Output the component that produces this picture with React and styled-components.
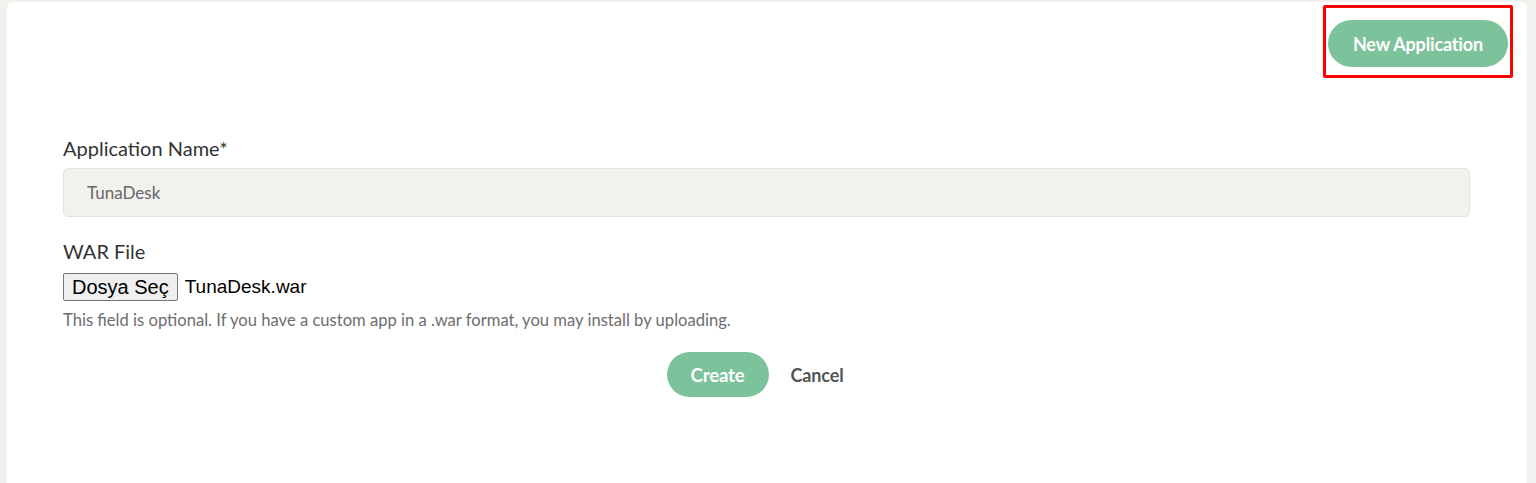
import React from 'react';
import styled, { createGlobalStyle } from 'styled-components';

const GlobalStyle = createGlobalStyle`
  html, body {
    margin: 0;
    padding: 0;
    background: #f2f1ee;
    font-family: Lato, "Open Sans", sans-serif;
    overflow: hidden;
  }
`;

// Styled components
const Page = styled.div`
  padding: 2px 9px 0 7px;
  height: 483px;
  box-sizing: border-box;
`;

const Card = styled.div`
  background: #fff;
  border-radius: 6px 6px 0 0;
  height: 100%;
  padding: 3px 14px 0 56px;
  box-sizing: border-box;
`;

const TopBar = styled.div`
  display: flex;
  justify-content: flex-end;
`;

const Highlight = styled.div`
  border: 3px solid #ff0000;
  border-radius: 2px;
  padding: 12px 2px 8px 2px;
`;

const PillButton = styled.button`
  background: #7cc29b;
  color: #fff;
  border: none;
  border-radius: 24px;
  height: ${(p) => p.$h}px;
  padding: 0 ${(p) => p.$px}px;
  font-family: Lato, sans-serif;
  font-weight: 700;
  font-size: ${(p) => p.$fs || 18}px;
  letter-spacing: -0.15px;
  cursor: pointer;
`;

const Form = styled.form`
  width: 1407px;
  margin-top: 58px;
  display: flex;
  flex-direction: column;
`;

const Label = styled.label`
  font-size: 20px;
  color: #333;
  line-height: 24px;
  margin-bottom: ${(p) => p.$mb}px;
`;

const TextInput = styled.div`
  height: 49px;
  box-sizing: border-box;
  background: #f2f1ee;
  border: 1px solid #e4e2de;
  border-radius: 5px;
  padding: 0 23px;
  display: flex;
  align-items: center;
  font-size: 17px;
  color: #666;
  margin-bottom: 22px;
`;

const FileRow = styled.div`
  display: flex;
  align-items: center;
  gap: 7px;
  height: 30px;
`;

const FileButton = styled.button`
  font-family: Arial, "Liberation Sans", sans-serif;
  font-size: 20px;
  color: #000;
  background: #efefef;
  border: 1px solid #767676;
  border-radius: 2px;
  height: 28px;
  padding: 0 8px;
  display: flex;
  align-items: center;
`;

const FileName = styled.span`
  font-family: Arial, "Liberation Sans", sans-serif;
  font-size: 19px;
  color: #000;
`;

const Help = styled.p`
  margin: 8px 0 0;
  font-size: 16.6px;
  color: #6e6e6e;
  line-height: 20px;
`;

const Actions = styled.div`
  display: flex;
  justify-content: center;
  align-items: center;
  gap: 22px;
  margin-top: 22px;
  padding-right: 23px;
`;

const CancelLink = styled.span`
  font-size: 18px;
  font-weight: 700;
  color: #555;
  letter-spacing: -0.15px;
`;

const App = () => {
  return (
    <>
      <GlobalStyle />
      <Page>
        <Card>
          <TopBar>
            <Highlight>
              <PillButton $h={47} $px={25}>New Application</PillButton>
            </Highlight>
          </TopBar>
          <Form>
            <Label $mb={8}>Application Name*</Label>
            <TextInput>TunaDesk</TextInput>
            <Label $mb={9}>WAR File</Label>
            <FileRow>
              <FileButton type="button">Dosya Seç</FileButton>
              <FileName>TunaDesk.war</FileName>
            </FileRow>
            <Help>This field is optional. If you have a custom app in a .war format, you may install by uploading.</Help>
            <Actions>
              <PillButton type="button" $h={45} $px={24} $fs={18.6}>Create</PillButton>
              <CancelLink>Cancel</CancelLink>
            </Actions>
          </Form>
        </Card>
      </Page>
    </>
  );
};

export default App;
